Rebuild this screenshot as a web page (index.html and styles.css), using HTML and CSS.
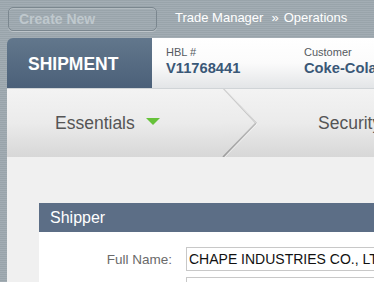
FILE: index.html
```html
<!DOCTYPE html>
<html>
<head>
<meta charset="utf-8">
<link rel="stylesheet" href="styles.css">
</head>
<body>
<div class="topbar">
  <div class="create">Create New</div>
  <div class="crumbs"><span>Trade Manager</span><span class="sep">»</span><span>Operations</span></div>
</div>
<div class="header">
  <div class="tab">SHIPMENT</div>
  <div class="info">
    <div class="field hbl">
      <div class="flabel">HBL #</div>
      <div class="fvalue">V11768441</div>
    </div>
    <div class="field">
      <div class="flabel">Customer</div>
      <div class="fvalue">Coke-Cola</div>
    </div>
  </div>
</div>
<div class="main">
  <div class="steps">
    <div class="step first">
      <span class="steptext">Essentials</span>
      <svg class="caret" width="14" height="7" viewBox="0 0 14 7"><polygon points="0,0 14,0 7,7" fill="#66c23a"/></svg>
    </div>
    <svg class="chev" width="36" height="69" viewBox="0 0 36 69">
      <defs>
        <linearGradient id="g" x1="0" y1="0" x2="0" y2="1">
          <stop offset="0" stop-color="#f3f3f3"/>
          <stop offset="0.5" stop-color="#ebebeb"/>
          <stop offset="1" stop-color="#d7d7d7"/>
        </linearGradient>
        <linearGradient id="s" x1="0" y1="0" x2="0" y2="1">
          <stop offset="0" stop-color="#d2d2d2"/>
          <stop offset="0.5" stop-color="#bdbdbd"/>
          <stop offset="1" stop-color="#9c9c9c"/>
        </linearGradient>
      </defs>
      <polygon points="0,0 1,0 34,35 1,69 0,69" fill="url(#g)"/>
      <polyline points="1,0 34,35 1,69" fill="none" stroke="url(#s)" stroke-width="1.6"/>
      <polyline points="3,1 35,36 3,69" fill="none" stroke="#ffffff" stroke-opacity="0.45" stroke-width="1"/>
    </svg>
    <div class="step second"><span class="steptext">Security</span></div>
  </div>
  <div class="content">
    <div class="card">
      <div class="cardhead">Shipper</div>
      <div class="cardbody">
        <div class="row">
          <div class="lbl">Full Name:</div>
          <div class="inp">CHAPE INDUSTRIES CO., LTD</div>
        </div>
        <div class="row">
          <div class="lbl"></div>
          <div class="inp"></div>
        </div>
      </div>
    </div>
  </div>
</div>
</body>
</html>
```

FILE: styles.css
```css
html, body {
  margin: 0;
  padding: 0;
}
body {
  width: 374px;
  height: 282px;
  overflow: hidden;
  font-family: "Liberation Sans", Arial, sans-serif;
  background-color: #9ea9b0;
  background-image: repeating-linear-gradient(0deg, rgba(255,255,255,0.05) 0 1px, rgba(0,0,0,0.03) 1px 2px);
}
.topbar {
  height: 38px;
  display: flex;
  align-items: flex-start;
  padding: 7px 0 0 8px;
  box-sizing: border-box;
}
.create {
  width: 149px;
  height: 24px;
  box-sizing: border-box;
  border: 1px solid #7b878f;
  border-radius: 5px;
  box-shadow: inset 0 1px 0 rgba(255,255,255,0.25), 0 1px 0 rgba(255,255,255,0.3);
  color: #bfc8cd;
  font-weight: bold;
  font-size: 14px;
  line-height: 23px;
  padding-left: 10px;
  white-space: nowrap;
}
.crumbs {
  margin-left: 18px;
  color: #ffffff;
  font-size: 13px;
  line-height: 21px;
  white-space: nowrap;
}
.crumbs .sep {
  margin: 0 5px 0 8px;
}
.header {
  display: flex;
  height: 50px;
  margin-left: 7px;
}
.tab {
  width: 145px;
  flex: none;
  background: linear-gradient(#62778c, #4b6079);
  border-radius: 6px 0 0 0;
  color: #ffffff;
  font-weight: bold;
  font-size: 17.5px;
  line-height: 52px;
  padding-left: 21px;
  box-sizing: border-box;
  white-space: nowrap;
}
.info {
  flex: 1;
  display: flex;
  background: linear-gradient(#ffffff 0%, #fbfbfb 50%, #e3e5e7 100%);
  padding: 8px 0 0 14px;
  white-space: nowrap;
  overflow: hidden;
}
.field.hbl {
  width: 138px;
  flex: none;
}
.flabel {
  color: #555a5f;
  font-size: 11px;
  line-height: 13px;
}
.fvalue {
  color: #3a5877;
  font-weight: bold;
  font-size: 14.7px;
  line-height: 18px;
}
.main {
  margin-left: 7px;
  background: #f0f0f0;
  height: 194px;
}
.steps {
  display: flex;
  height: 69px;
  background: linear-gradient(#f3f3f3 0%, #ebebeb 50%, #d7d7d7 100%);
  white-space: nowrap;
  overflow: hidden;
  border-top: 1px solid #d0d4d7;
  box-sizing: border-box;
}
.step {
  display: flex;
  align-items: center;
}
.step.first {
  width: 215px;
  flex: none;
  padding-left: 48px;
  box-sizing: border-box;
}
.chev {
  flex: none;
  display: block;
  margin-top: -1px;
}
.step.second {
  padding-left: 60px;
}
.steptext {
  color: #555555;
  font-size: 17.5px;
  line-height: 20px;
}
.caret {
  margin-left: 11px;
  margin-top: -3px;
  display: block;
}
.content {
  padding: 46px 0 0 32px;
}
.card {
  background: #ffffff;
}
.cardhead {
  height: 29px;
  background: #5c6e86;
  color: #ffffff;
  font-size: 16px;
  line-height: 29px;
  padding-left: 11px;
}
.cardbody {
  padding-top: 15px;
  display: flex;
  flex-direction: column;
  gap: 6px;
}
.row {
  display: flex;
  align-items: center;
}
.lbl {
  width: 133px;
  flex: none;
  text-align: right;
  color: #6a6a6a;
  font-size: 13.5px;
  padding-right: 14px;
  box-sizing: content-box;
}
.inp {
  flex: 1;
  height: 24px;
  box-sizing: border-box;
  border: 1px solid #c8c8c8;
  border-right: none;
  background: #ffffff;
  color: #111111;
  font-size: 14px;
  line-height: 22px;
  padding-left: 2px;
  white-space: nowrap;
  overflow: hidden;
}
```
